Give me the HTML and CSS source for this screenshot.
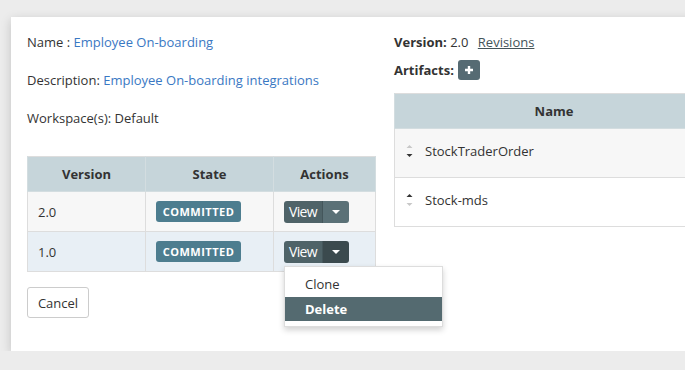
FILE: index.html
```html
<!DOCTYPE html>
<html>
<head>
<meta charset="utf-8">
<link rel="stylesheet" href="styles.css">
</head>
<body>
<div class="panel">
  <div class="left">
    <p class="info">Name : <span class="link">Employee On-boarding</span></p>
    <p class="info">Description: <span class="link">Employee On-boarding integrations</span></p>
    <p class="info">Workspace(s): Default</p>
    <table class="grid versions">
      <thead>
        <tr><th class="c1">Version</th><th class="c2">State</th><th class="c3">Actions</th></tr>
      </thead>
      <tbody>
        <tr class="odd">
          <td>2.0</td>
          <td><span class="badge">COMMITTED</span></td>
          <td>
            <div class="btn-group">
              <span class="btn-main">View</span><span class="btn-caret"><span class="caret"></span></span>
            </div>
          </td>
        </tr>
        <tr class="hover">
          <td>1.0</td>
          <td><span class="badge">COMMITTED</span></td>
          <td>
            <div class="btn-group open">
              <span class="btn-main">View</span><span class="btn-caret"><span class="caret"></span></span>
              <ul class="menu">
                <li>Clone</li>
                <li class="active">Delete</li>
              </ul>
            </div>
          </td>
        </tr>
      </tbody>
    </table>
    <button class="cancel">Cancel</button>
  </div>
  <div class="right">
    <p class="meta"><b>Version:</b> 2.0 <a class="rev">Revisions</a></p>
    <p class="meta art"><b>Artifacts:</b> <span class="plus"><svg width="10" height="10" viewBox="0 0 10 10"><path d="M5 1v8M1 5h8" stroke="#fff" stroke-width="2.4"/></svg></span></p>
    <table class="grid artifacts">
      <thead><tr><th>Name</th></tr></thead>
      <tbody>
        <tr class="odd"><td><span class="sort"><svg width="7" height="14" viewBox="0 0 7 14"><path d="M0.5 4L3.5 1L6.5 4Z" fill="#c8c8c8"/><path d="M0.5 10L3.5 13L6.5 10Z" fill="#333"/></svg></span>StockTraderOrder</td></tr>
        <tr><td><span class="sort"><svg width="7" height="14" viewBox="0 0 7 14"><path d="M0.5 4L3.5 1L6.5 4Z" fill="#333"/><path d="M0.5 10L3.5 13L6.5 10Z" fill="#c8c8c8"/></svg></span>Stock-mds</td></tr>
      </tbody>
    </table>
  </div>
</div>
</body>
</html>
```
FILE: styles.css
```css
html, body {
  margin: 0;
  padding: 0;
  background: #ececec;
  font-family: "Open Sans", "Noto Sans", sans-serif;
  font-size: 13px;
  color: #333;
  overflow: hidden;
}
.panel {
  margin: 17px 0 0 11px;
  width: 760px;
  height: 334px;
  background: #fff;
  box-shadow: 0 3px 10px rgba(0,0,0,0.18);
  box-sizing: border-box;
  padding: 15px 0 0 16px;
  display: flex;
  gap: 18px;
}
.left {
  width: 349px;
  flex: none;
}
.info {
  margin: 0 0 18px;
  line-height: 20px;
}
.link { color: #3a78c3; }
.grid {
  border-collapse: collapse;
  border: 1px solid #ddd;
  table-layout: fixed;
}
.grid th {
  background: #c6d5da;
  font-weight: bold;
  text-align: center;
  border: 1px solid #d3dde0;
  border-top: none;
  height: 34px;
  padding: 0;
}
.grid td {
  border: 1px solid #ddd;
  padding: 0 0 0 10px;
}
.versions {
  width: 349px;
  margin-top: 28px;
}
.versions td { height: 39px; }
.versions .c1 { width: 117px; }
.versions .c2 { width: 127px; }
tr.odd td { background: #f7f7f7; }
tr.hover td { background: #e8eff5; }
.badge {
  display: inline-block;
  vertical-align: middle;
  background: #4d7d8f;
  color: #fff;
  font-weight: bold;
  font-size: 11px;
  line-height: 21px;
  height: 21px;
  width: 85px;
  text-align: center;
  border-radius: 3px;
  letter-spacing: 0.5px;
}
.btn-group {
  position: relative;
  display: inline-flex;
  height: 22px;
  border-radius: 3px;
  color: #fff;
  vertical-align: middle;
}
.btn-main {
  background: #4f6368;
  width: 39px;
  line-height: 22px;
  font-size: 14px;
  text-align: center;
  border-radius: 3px 0 0 3px;
  letter-spacing: -0.6px;
  border-right: 1px solid #44565b;
  box-sizing: border-box;
}
.btn-caret {
  background: #5b7177;
  width: 26px;
  border-radius: 0 3px 3px 0;
  display: flex;
  align-items: center;
  justify-content: center;
}
.open .btn-caret { background: #3b4a4e; }
.caret {
  width: 0; height: 0;
  border-left: 4px solid transparent;
  border-right: 4px solid transparent;
  border-top: 4px solid #fff;
}
.menu {
  position: absolute;
  top: 25px;
  left: 0;
  width: 159px;
  margin: 0;
  padding: 5px 0;
  list-style: none;
  background: #fff;
  border: 1px solid #ddd;
  box-sizing: border-box;
  box-shadow: 0 3px 6px rgba(0,0,0,0.18);
  color: #333;
  z-index: 5;
}
.menu li {
  padding: 0 0 0 20px;
  line-height: 24px;
  height: 24px;
}
.menu li:first-child { height: 25px; line-height: 25px; }
.menu li.active {
  background: #546a70;
  color: #fff;
  font-weight: bold;
}
.cancel {
  margin-top: 15px;
  width: 62px;
  height: 31px;
  background: #fff;
  border: 1px solid #ccc;
  border-radius: 3px;
  font-family: inherit;
  font-size: 13px;
  color: #333;
  padding: 0;
}
.right {
  width: 320px;
  flex: none;
}
.meta {
  margin: 0;
  line-height: 20px;
}
.meta b { font-weight: bold; }
.rev {
  color: #44545a;
  text-decoration: underline;
  margin-left: 6px;
}
.art { margin-top: 8px; display: flex; align-items: center; gap: 4px; }
.plus {
  display: inline-flex;
  align-items: center;
  justify-content: center;
  width: 22px;
  height: 20px;
  background: #566b73;
  border-radius: 3px;
}
.artifacts {
  width: 320px;
  margin-top: 13px;
}
.artifacts td {
  height: 43px;
  padding: 0 0 5px 11px;
  border-left: 1px solid #ddd;
  border-right: none;
}
.sort {
  display: inline-block;
  width: 7px;
  margin-right: 12px;
  vertical-align: middle;
  position: relative;
  top: -1px;
}
.sort svg { display: block; }
```
